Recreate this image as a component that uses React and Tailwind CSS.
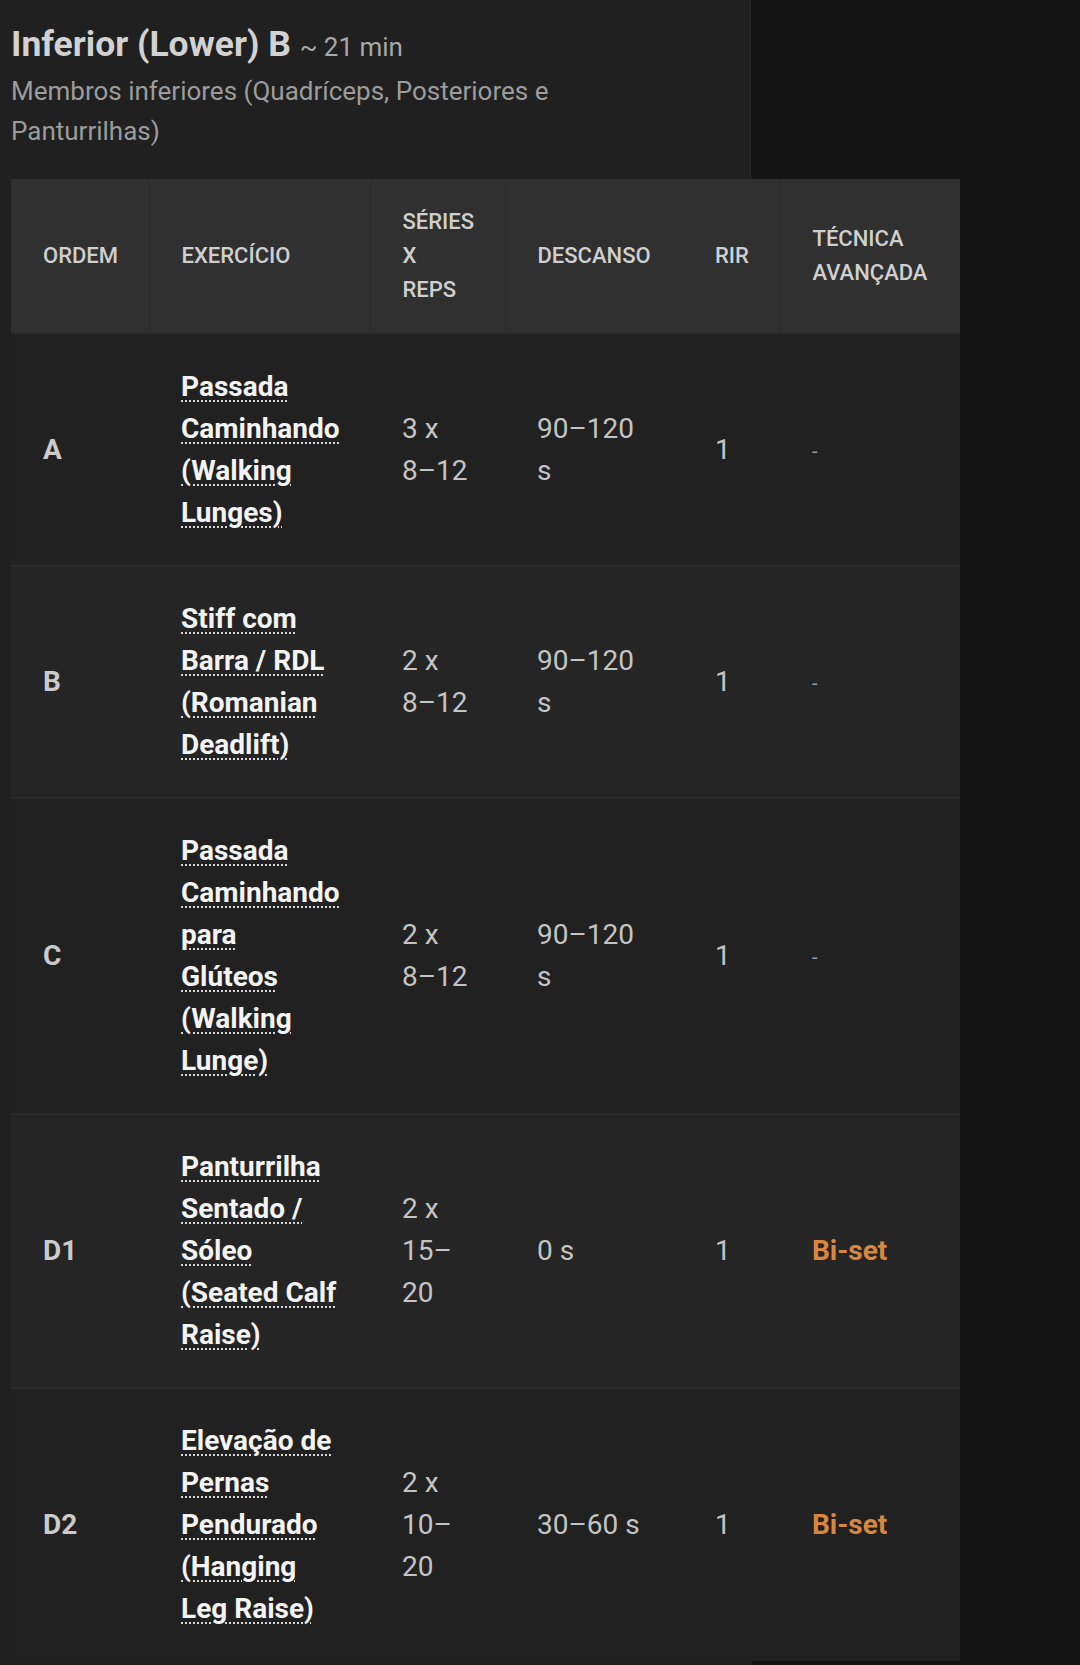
import React from "react";

const rows = [
  { ord: "A", ex: "Passada Caminhando (Walking Lunges)", sr: "3 x 8–12", desc: "90–120 s", rir: "1", tec: "-" },
  { ord: "B", ex: "Stiff com Barra / RDL (Romanian Deadlift)", sr: "2 x 8–12", desc: "90–120 s", rir: "1", tec: "-" },
  { ord: "C", ex: "Passada Caminhando para Glúteos (Walking Lunge)", sr: "2 x 8–12", desc: "90–120 s", rir: "1", tec: "-" },
  { ord: "D1", ex: "Panturrilha Sentado / Sóleo (Seated Calf Raise)", sr: "2 x 15–20", desc: "0 s", rir: "1", tec: "Bi-set" },
  { ord: "D2", ex: "Elevação de Pernas Pendurado (Hanging Leg Raise)", sr: "2 x 10–20", desc: "30–60 s", rir: "1", tec: "Bi-set" },
];

export default function App() {
  return (
    <div className="min-h-[1665px] w-[1080px] bg-[#141414] font-['Roboto',sans-serif] overflow-hidden">
      <div className="w-[751px] min-h-[1665px] bg-[#202020] border-r border-[#2c2c2c] px-[11px] pt-[22px]">
        <h3 className="text-[35.5px] leading-[44px] font-bold text-[#d2d2d2] whitespace-nowrap">
          Inferior (Lower) B{" "}
          <span className="text-[26px] font-normal text-[#a8a8a8]">~ 21 min</span>
        </h3>
        <p className="mt-[2px] text-[26px] leading-[40px] text-[#9c9c9c] w-[560px]">
          Membros inferiores (Quadríceps, Posteriores e Panturrilhas)
        </p>
        <table className="mt-[28px] w-[949px] table-fixed border-collapse">
          <thead>
            <tr className="bg-[#303030] text-[22px] leading-[34px] font-medium text-[#cfcfcf] text-left uppercase">
              <th className="w-[138px] px-[32px] py-[26px] font-medium">Ordem</th>
              <th className="w-[221px] px-[32px] py-[26px] font-medium border-l border-[#2a2a2a]">Exercício</th>
              <th className="w-[135px] px-[32px] py-[26px] font-medium border-l border-[#2a2a2a]">Séries x Reps</th>
              <th className="w-[178px] px-[32px] py-[26px] font-medium border-l border-[#2a2a2a]">Descanso</th>
              <th className="w-[97px] px-[32px] py-[26px] font-medium">RIR</th>
              <th className="w-[180px] px-[32px] py-[26px] font-medium border-l border-[#2a2a2a]">Técnica Avançada</th>
            </tr>
          </thead>
          <tbody>
            {rows.map((r, i) => (
              <tr
                key={r.ord}
                className={`${i % 2 === 1 ? "bg-[#252525]" : "bg-[#212121]"} ${i === 0 ? "border-t-2 border-[#262626]" : "border-t-2 border-[#2b2b2b]"} text-[28px] leading-[42px] text-[#c4c4c4] align-middle`}
              >
                <td className="px-[32px] py-[31px] font-bold text-[#cbcbcb]">{r.ord}</td>
                <td className="px-[32px] py-[31px]">
                  <span className="font-bold text-[#f3f3f3] underline decoration-dotted decoration-2 decoration-[#d8d8d8] underline-offset-[4px]">
                    {r.ex}
                  </span>
                </td>
                <td className="px-[32px] py-[31px]">{r.sr}</td>
                <td className="px-[32px] py-[31px]">{r.desc}</td>
                <td className="px-[32px] py-[31px]">{r.rir}</td>
                <td className="px-[32px] py-[31px]">
                  {r.tec === "-" ? (
                    <span className="text-[#9a9a9a] text-[20px]">-</span>
                  ) : (
                    <span className="font-bold text-[#d9873f]">{r.tec}</span>
                  )}
                </td>
              </tr>
            ))}
          </tbody>
        </table>
      </div>
    </div>
  );
}
